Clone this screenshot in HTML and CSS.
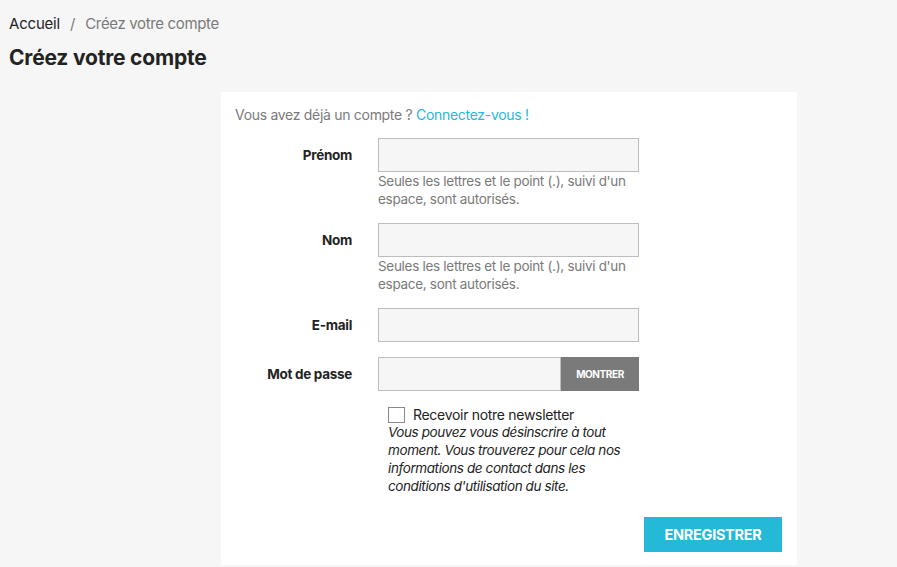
FILE: index.html
```html
<!DOCTYPE html>
<html lang="fr">
<head>
<meta charset="utf-8">
<title>Créez votre compte</title>
<link rel="stylesheet" href="styles.css">
</head>
<body>
<nav class="breadcrumb">
  <a href="#" class="crumb-home">Accueil</a>
  <span class="sep">/</span>
  <span class="crumb-current">Créez votre compte</span>
</nav>
<h1 class="page-title">Créez votre compte</h1>
<section class="card">
  <p class="login-hint">Vous avez déjà un compte ? <a href="#" class="link">Connectez-vous !</a></p>
  <form class="form">
    <div class="row row-name">
      <label class="label">Prénom</label>
      <div class="field">
        <input class="input" type="text">
        <div class="help">Seules les lettres et le point (.), suivi d'un espace, sont autorisés.</div>
      </div>
    </div>
    <div class="row row-name">
      <label class="label">Nom</label>
      <div class="field">
        <input class="input" type="text">
        <div class="help">Seules les lettres et le point (.), suivi d'un espace, sont autorisés.</div>
      </div>
    </div>
    <div class="row row-mail">
      <label class="label">E-mail</label>
      <div class="field">
        <input class="input" type="email">
      </div>
    </div>
    <div class="row">
      <label class="label">Mot de passe</label>
      <div class="field">
        <div class="pw-group">
          <input class="input pw-input" type="password">
          <button type="button" class="pw-btn">MONTRER</button>
        </div>
      </div>
    </div>
    <div class="row">
      <span class="label"></span>
      <div class="field newsletter">
        <label class="check-line"><span class="checkbox"></span>Recevoir notre newsletter</label>
        <em class="note">Vous pouvez vous désinscrire à tout moment. Vous trouverez pour cela nos informations de contact dans les conditions d'utilisation du site.</em>
      </div>
    </div>
    <div class="actions">
      <button type="button" class="submit">ENREGISTRER</button>
    </div>
  </form>
</section>
</body>
</html>
```
FILE: styles.css
```css
* { box-sizing: border-box; }
html, body { margin: 0; padding: 0; }
body {
  background: #f6f6f6;
  font-family: Inter, "Noto Sans", sans-serif;
  color: #232323;
  height: 567px;
  overflow: hidden;
}
.breadcrumb {
  padding: 14px 0 0 9px;
  font-size: 15px;
  line-height: 20px;
  letter-spacing: -0.2px;
}
.crumb-home { color: #232323; text-decoration: none; }
.sep { color: #7a7a7a; margin: 0 6px; }
.crumb-current { color: #7a7a7a; letter-spacing: -0.35px; }
.page-title {
  margin: 11px 0 0 9px;
  font-size: 21px;
  line-height: 26px;
  font-weight: 700;
  letter-spacing: -0.2px;
}
.card {
  background: #fff;
  width: 576px;
  margin: 21px 0 0 221px;
  padding: 13px 15px 13px 14px;
}
.login-hint {
  margin: 0;
  font-size: 14px;
  line-height: 19px;
  color: #7a7a7a;
  letter-spacing: -0.3px;
}
.link { color: #24b9d7; text-decoration: none; }
.form { margin-top: 14px; }
.row {
  display: grid;
  grid-template-columns: 117px 261px;
  column-gap: 26px;
  margin-bottom: 16px;
}
.row-name { margin-bottom: 15px; }
.row-mail { margin-bottom: 15px; }
.label {
  text-align: right;
  font-weight: 700;
  font-size: 13.5px;
  line-height: 34px;
  letter-spacing: -0.3px;
}
.input {
  display: block;
  width: 261px;
  height: 34px;
  background: #f6f6f6;
  border: 1px solid #bdbdbd;
  margin: 0;
  padding: 0 10px;
  outline: none;
}
.help {
  color: #7a7a7a;
  font-size: 13.5px;
  line-height: 17.5px;
  margin-top: 1px;
  letter-spacing: -0.3px;
}
.pw-group { display: flex; }
.pw-input { width: 183px; }
.pw-btn {
  width: 78px;
  height: 34px;
  border: 0;
  background: #7a7a7a;
  color: #fff;
  font-family: inherit;
  font-size: 10px;
  font-weight: 700;
  letter-spacing: -0.4px;
  padding: 0;
}
.newsletter { padding-left: 10px; margin-top: -1px; }
.check-line {
  display: flex;
  align-items: center;
  font-size: 14px;
  line-height: 18px;
  letter-spacing: -0.3px;
}
.checkbox {
  width: 17px;
  height: 16px;
  border: 1px solid #8a8a8a;
  margin-right: 8px;
  background: #fff;
}
.note {
  display: block;
  font-size: 13.5px;
  line-height: 18px;
  letter-spacing: -0.4px;
  width: 250px;
  margin-top: -1px;
}
.actions {
  display: flex;
  justify-content: flex-end;
  margin-top: 22px;
}
.submit {
  width: 138px;
  height: 35px;
  border: 0;
  background: #24b9d7;
  color: #fff;
  font-family: inherit;
  font-size: 14.5px;
  font-weight: 700;
  letter-spacing: -0.3px;
  padding: 0;
}
```
